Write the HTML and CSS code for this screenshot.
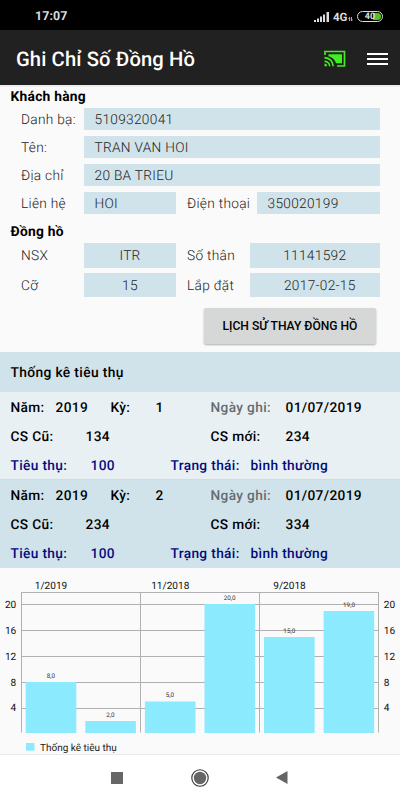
FILE: index.html
```
<!DOCTYPE html>
<html lang="vi">
<head>
<meta charset="utf-8">
<title>Ghi Chỉ Số Đồng Hồ</title>
<link rel="stylesheet" href="styles.css">
</head>
<body>
<div class="status">
  <span class="clock">17:07</span>
  <svg class="signal" width="16" height="12" viewBox="0 0 16 12" fill="#ddd"><path d="M0 9h2v2H0zM3 7.500h2V11H3zM6 5.500h2V11H6zM9 3.500h2V11H9zM12.500 1h2.500v10h-2.500z"/></svg>
  <span class="net">4G</span>
  <svg class="arrows" width="5" height="6" viewBox="0 0 5 6" stroke="#aaa" fill="none"><path d="M1.500 1v4M3.500 1v4M.3 2.500h2M2.700 4h2"/></svg>
  <span class="battery"><span class="level">40</span></span>
</div>
<header class="appbar">
  <h1>Ghi Chỉ Số Đồng Hồ</h1>
  <svg class="cast" width="22" height="18" viewBox="0 0 22 18" fill="none" stroke="#40ee22">
    <path stroke-width="1.700" d="M1 5V1.500h19.500v14.500h-7.500"/>
    <path fill="#40ee22" stroke="none" d="M4.500 4.300h13.500v9h-5.800C10.800 9.500 8.300 7 4.500 6.200z"/>
    <path stroke-width="1.600" d="M.5 7.600c5 .2 8.500 3.800 8.700 8.700M.5 11.200c3 .2 5 2.200 5.200 5.100"/>
    <path fill="#40ee22" stroke="none" d="M.5 13.600c1.700.2 2.500 1.200 2.700 2.700H.5z"/>
  </svg>
  <svg class="menu" width="21" height="13" viewBox="0 0 21 13" fill="#fff"><path d="M0 0h21v2H0zM0 5h21v2H0zM0 10h21v2H0z"/></svg>
</header>
<main>
  <section class="info">
    <h2>Khách hàng</h2>
    <div class="customer">
      <span>Danh bạ:</span><b class="wide">5109320041</b>
      <span>Tên:</span><b class="wide">TRAN VAN HOI</b>
      <span>Địa chỉ</span><b class="wide">20 BA TRIEU</b>
      <span>Liên hệ</span><b>HOI</b><span class="second">Điện thoại</span><b>350020199</b>
    </div>
    <h2 class="meter-title">Đồng hồ</h2>
    <div class="meter">
      <span>NSX</span><b>ITR</b><span class="second">Số thân</span><b>11141592</b>
      <span>Cỡ</span><b>15</b><span class="second">Lắp đặt</span><b class="date">2017-02-15</b>
    </div>
    <button class="history">LỊCH SỬ THAY ĐỒNG HỒ</button>
  </section>
  <section class="stats">
    <h2>Thống kê tiêu thụ</h2>
    <article class="record">
      <div class="period"><span>Năm:</span><span>2019</span><span>Kỳ:</span><span>1</span><span class="muted">Ngày ghi:</span><span>01/07/2019</span></div>
      <div class="reading"><span>CS Cũ:</span><span>134</span><span>CS mới:</span><span>234</span></div>
      <div class="usage"><span>Tiêu thụ:</span><span>100</span><span>Trạng thái:</span><span>bình thường</span></div>
    </article>
    <article class="record alt">
      <div class="period"><span>Năm:</span><span>2019</span><span>Kỳ:</span><span>2</span><span class="muted">Ngày ghi:</span><span>01/07/2019</span></div>
      <div class="reading"><span>CS Cũ:</span><span>234</span><span>CS mới:</span><span>334</span></div>
      <div class="usage"><span>Tiêu thụ:</span><span>100</span><span>Trạng thái:</span><span>bình thường</span></div>
    </article>
  </section>
  <svg class="chart" width="400" height="186" viewBox="0 0 400 186">
    <g class="gridlines">
      <path d="M21 24.500H379M21 36.500H379M21 62.500H379M21 88.500H379M21 114.500H379M21 140.500H379"/>
      <path d="M21.500 24V164.500M140.500 24V164.500M259.500 24V164.500M378.500 24V164.500"/>
    </g>
    <g class="bars">
      <rect x="25.700" y="114" width="50.600" height="51"/>
      <rect x="85.300" y="153" width="50.600" height="12"/>
      <rect x="144.900" y="133.500" width="50.600" height="31.500"/>
      <rect x="204.500" y="36" width="50.600" height="129"/>
      <rect x="264" y="69" width="50.600" height="96"/>
      <rect x="323.600" y="43" width="50.600" height="122"/>
      <rect x="26" y="175" width="8.500" height="7.700"/>
    </g>
    <g class="values">
      <text x="51" y="109.800">8,0</text><text x="110.500" y="148.800">2,0</text><text x="170" y="129.300">5,0</text>
      <text x="229.700" y="32">20,0</text><text x="289.300" y="64.500">15,0</text><text x="349" y="38.500">19,0</text>
    </g>
    <g class="months"><text x="51" y="21">1/2019</text><text x="170.300" y="21">11/2018</text><text x="289.500" y="21">9/2018</text></g>
    <g class="left"><text x="16.300" y="39.500">20</text><text x="16.300" y="65.500">16</text><text x="16.300" y="91.500">12</text><text x="16.300" y="117.500">8</text><text x="16.300" y="143">4</text></g>
    <g class="right"><text x="383.800" y="39.500">20</text><text x="383.800" y="65.500">16</text><text x="383.800" y="91.500">12</text><text x="383.800" y="117.500">8</text><text x="383.800" y="143">4</text></g>
    <text class="legend" x="40" y="182.500">Thống kê tiêu thụ</text>
  </svg>
</main>
<nav class="navbar">
  <svg width="12" height="12" viewBox="0 0 12 12"><path fill="#666" d="M0 0h12v12H0z"/></svg>
  <svg width="18" height="18" viewBox="0 0 18 18"><circle cx="9" cy="9" r="8.200" fill="none" stroke="#333" stroke-width="1.100"/><circle cx="9" cy="9" r="6.200" fill="#666"/></svg>
  <svg width="12" height="13" viewBox="0 0 12 13"><path fill="#666" d="M0 6.500L11.500 0v13z"/></svg>
</nav>
</body>
</html>
```

FILE: styles.css
```
* { box-sizing: border-box; }
body {
  margin: 0;
  width: 400px;
  height: 800px;
  overflow: hidden;
  background: #fafafa;
  font-family: Roboto, sans-serif;
  font-size: 13.7px;
  color: #000;
  text-rendering: geometricPrecision;
}
h1, h2 { margin: 0; }

.status {
  height: 30px;
  background: #000;
  color: #ddd;
  display: flex;
  align-items: center;
  padding: 3px 17px 0 35px;
}
.clock { font-size: 12.4px; font-weight: 700; letter-spacing: .1px; margin-right: auto; }
.net { font-size: 11.5px; font-weight: 700; margin-left: 3px; width: 15px; }
.arrows { margin: 4px 4px 0 0; }
.battery {
  width: 26px;
  height: 11px;
  border: 1px solid #ddd;
  border-radius: 6px;
  padding: 1px;
  display: flex;
}
.level {
  flex: 1;
  border-radius: 4px;
  font-size: 9px;
  line-height: 8px;
  font-weight: 700;
  text-align: center;
  background: linear-gradient(90deg, #000 65%, #4ec51c 65%);
}

.appbar {
  height: 55px;
  background: #212121;
  color: #fff;
  display: flex;
  align-items: center;
  padding: 3px 12px 0 16px;
}
.appbar h1 { font-size: 20.2px; font-weight: 500; letter-spacing: .12px; margin-right: auto; }
.cast { margin-right: 21px; }

.info {
  height: 267px;
  padding: 1px 20.500px 0 10.500px;
  border-top: 2px solid #eee;
  display: flex;
  flex-direction: column;
}
.info h2, .stats h2 { font-size: 13.8px; font-weight: 700; letter-spacing: .25px; height: 17px; line-height: 19px; }
.customer, .meter {
  display: grid;
  padding-left: 10.500px;
  font-weight: 300;
  letter-spacing: .3px;
  color: #222;
}
.customer {
  margin-top: 2.500px;
  grid-template-columns: 63px 92px 81px 1fr;
  grid-auto-rows: 22.500px;
  row-gap: 5.500px;
  line-height: 25px;
}
.meter {
  margin-top: 3.500px;
  grid-template-columns: 63px 92px 74px 1fr;
  grid-auto-rows: 24.500px;
  row-gap: 5px;
  line-height: 27px;
}
.customer b, .meter b { font-weight: 300; background: #d1e3ea; padding-left: 10.500px; }
.customer .wide { grid-column: 2 / 5; }
.customer .second, .meter .second { padding-left: 11px; }
.meter b { padding: 0; text-align: center; }
.meter .date { padding-left: 10px; }
.meter-title { margin-top: 8.500px; }
.history {
  align-self: flex-end;
  width: 172px;
  height: 36px;
  margin: 11px 3.500px 0 0;
  border: 0;
  border-radius: 2px;
  background: #d6d7d7;
  box-shadow: 0 1px 2px rgba(0, 0, 0, .3);
  font: 500 12.1px/36px Roboto, sans-serif;
  padding: 0;
  white-space: nowrap;
}

.stats { font-weight: 500; letter-spacing: .35px; }
.stats h2 {
  height: 40px;
  line-height: 43px;
  padding-left: 10.500px;
  background: #d1e3ea;
  font-weight: 500;
  letter-spacing: .35px;
}
.record { height: 88px; padding-left: 10.500px; background: #e9f0f4; border-bottom: 1px solid #d3dadd; }
.record.alt { background: #d1e3ea; border-color: #d1e3ea; }
.record div { display: grid; height: 29px; line-height: 33px; white-space: nowrap; }
.period { grid-template-columns: 45px 55px 45px 55px 75px 1fr; }
.reading { grid-template-columns: 75px 125px 75px 1fr; }
.usage { grid-template-columns: 80px 80px 80px 1fr; color: #000c7c; }
.muted { color: #666b6e; }

.chart { display: block; }
.gridlines { stroke: #b0b0b0; stroke-width: 1; fill: none; }
.bars { fill: #8ceaff; }
.values { font-size: 6.3px; text-anchor: middle; fill: #333; }
.months, .left, .right { font-size: 10.1px; fill: #111; }
.months { text-anchor: middle; }
.left { text-anchor: end; }
.legend { font-size: 10px; fill: #222; }

.navbar {
  height: 46px;
  background: #fff;
  border-top: 1px solid #eaeaea;
  display: flex;
  justify-content: space-between;
  align-items: center;
  padding: 0 112px 0 111px;
}
```
